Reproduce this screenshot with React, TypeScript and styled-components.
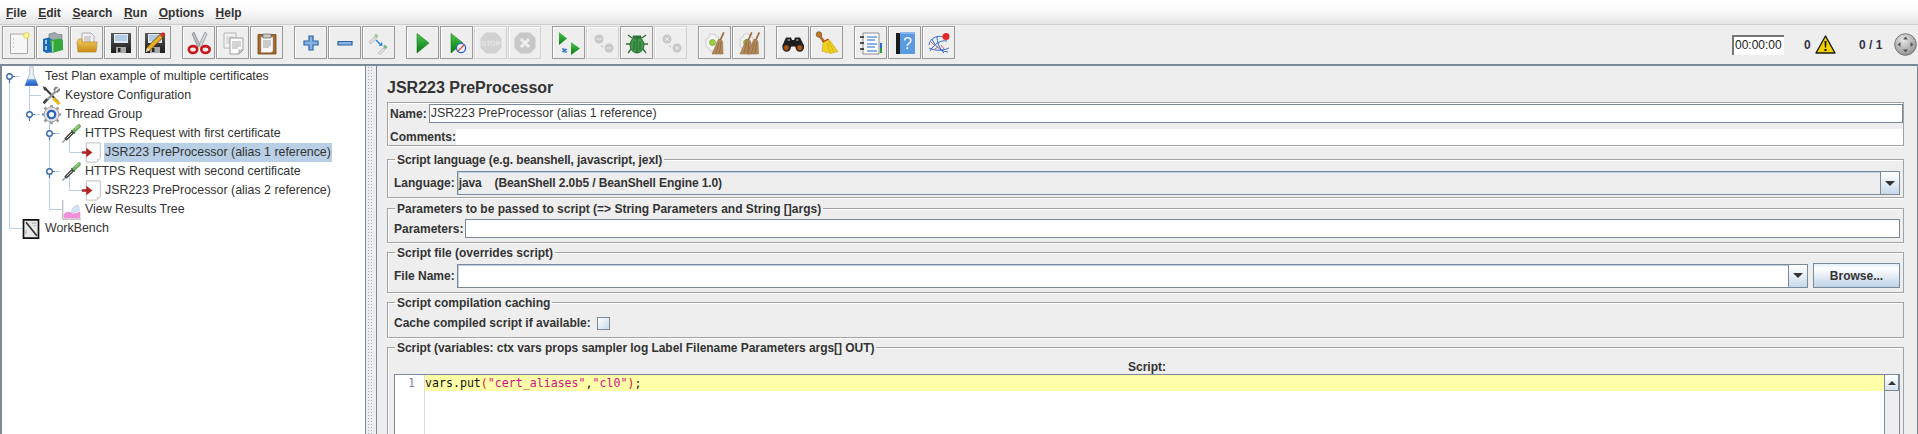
import styled, { createGlobalStyle } from "styled-components";
import type { ReactNode } from "react";

const Global = createGlobalStyle`
  html, body {
    margin: 0;
    padding: 0;
    overflow: hidden;
    background: #eeeeee;
  }
  * {
    box-sizing: border-box;
  }
`;

const Window = styled.div`
  width: 1918px;
  height: 434px;
  overflow: hidden;
  display: flex;
  flex-direction: column;
  font-family: "Liberation Sans", Arial, sans-serif;
  font-size: 12px;
  color: #333333;
  background: #eeeeee;
`;

const MenuBar = styled.div`
  height: 25px;
  flex: none;
  display: flex;
  align-items: center;
  gap: 11.5px;
  padding: 2px 0 0 6px;
  font-weight: bold;
  background: linear-gradient(#ffffff 0%, #fbfbfb 40%, #e4e4e4 100%);
  border-bottom: 1px solid #cfcfcf;
`;

const MenuItem = styled.span`
  display: inline-block;
  &::first-letter {
    text-decoration: underline;
  }
`;

const ToolBar = styled.div`
  height: 39px;
  flex: none;
  display: flex;
  align-items: flex-start;
  padding: 1px 1px 0 2px;
`;

const ToolGroup = styled.div`
  display: flex;
  gap: 1px;
  margin-right: 11px;
  &:last-of-type {
    margin-right: 0;
  }
`;

const ToolButton = styled.div<{ $off?: boolean }>`
  width: 33px;
  height: 33px;
  display: flex;
  align-items: center;
  justify-content: center;
  background: #eeeeee;
  border: 1px solid ${(p) => (p.$off ? "#d2d2d2" : "#9a9a9a")};
  box-shadow: inset 1px 1px 0 #ffffff;
`;

const Status = styled.div`
  margin-left: auto;
  display: flex;
  align-items: center;
  height: 37px;
  font-weight: bold;
  color: #33334a;
`;

const Timer = styled.div`
  width: 52px;
  height: 20px;
  background: #ffffff;
  border-top: 2px solid #777777;
  border-left: 2px solid #777777;
  font-weight: normal;
  color: #222222;
  line-height: 17px;
  padding-left: 1px;
  white-space: nowrap;
`;

const ErrorCount = styled.span`
  margin-left: 20px;
  width: 11px;
`;

const RunCount = styled.span`
  margin-left: 23px;
  width: 35px;
  white-space: pre;
`;

const Split = styled.div`
  flex: 1;
  min-height: 0;
  display: flex;
  border-top: 2px solid #7a8a99;
`;

const TreePane = styled.div`
  width: 366px;
  flex: none;
  position: relative;
  background: #ffffff;
  border-left: 2px solid #7a8a99;
  border-right: 1px solid #7a8a99;
  padding-top: 1px;
  font-size: 12.4px;
`;

const Lines = styled.svg`
  position: absolute;
  left: -2px;
  top: -66px;
  pointer-events: none;
`;

const TreeRow = styled.div<{ $level: number }>`
  position: relative;
  height: 19px;
  display: flex;
  align-items: center;
  padding-left: ${(p) => 19 + p.$level * 20}px;
  white-space: nowrap;
`;

const TreeIcon = styled.span`
  width: 24px;
  height: 19px;
  flex: none;
  display: flex;
  align-items: center;
`;

const TreeLabel = styled.span<{ $selected?: boolean }>`
  height: 19px;
  line-height: 19px;
  padding: 0 1px;
  margin-left: -1px;
  background: ${(p) => (p.$selected ? "#b8cfe5" : "transparent")};
`;

const Divider = styled.div`
  width: 10px;
  flex: none;
  background-color: #eeeeee;
  background-image: radial-gradient(#9fb0c0 0.7px, transparent 0.8px);
  background-size: 3px 3px;
  background-position: 2px 0;
  border-left: 2px solid #eeeeee;
  border-right: 2px solid #eeeeee;
`;

const FormPane = styled.div`
  flex: 1;
  min-width: 0;
  display: flex;
  flex-direction: column;
  border-left: 1px solid #7a8a99;
  border-right: 1px solid #7a8a99;
  padding: 0 13px 0 10px;
`;

const Title = styled.div`
  height: 36px;
  flex: none;
  padding-top: 13px;
  line-height: 18px;
  font-size: 16px;
  font-weight: bold;
`;

const NamePanel = styled.div`
  height: 44px;
  flex: none;
  display: flex;
  flex-direction: column;
  gap: 6px;
  border: 1px solid #a3a3a3;
  box-shadow: 0 1px 0 #ffffff, inset 1px 1px 0 #ffffff;
  font-weight: bold;
  padding: 1px 0 0 2px;
  margin-bottom: 5px;
`;

const Row = styled.div<{ $h?: number }>`
  display: flex;
  align-items: center;
  height: ${(p) => p.$h ?? 18}px;
  white-space: pre;
`;

const Group = styled.fieldset<{ $h: number; $top?: number; $gap?: number }>`
  height: ${(p) => p.$h}px;
  flex: none;
  margin: 0 0 ${(p) => p.$gap ?? 1}px;
  min-width: 0;
  padding: ${(p) => p.$top ?? 3}px 3px 0 6px;
  border: 1px solid #a3a3a3;
  box-shadow: 0 1px 0 #ffffff, inset 1px 1px 0 #ffffff;
  font-weight: bold;
  display: block;
`;

const Legend = styled.legend<{ $track?: number }>`
  margin-left: 1px;
  padding: 0 2px 0 2px;
  font-weight: bold;
  height: 16px;
  line-height: 18px;
  white-space: nowrap;
  letter-spacing: ${(p) => p.$track ?? 0}px;
`;

const TextField = styled.div<{ $h?: number }>`
  flex: 1;
  height: ${(p) => p.$h ?? 19}px;
  margin-left: 2px;
  background: #ffffff;
  border: 1px solid #7a8a99;
  font-weight: normal;
  font-size: 12.4px;
  line-height: 16px;
  padding-left: 1px;
`;

const BlankField = styled.div`
  flex: 1;
  height: 16px;
  background: #ffffff;
`;

const Combo = styled.div<{ $white?: boolean }>`
  flex: 1;
  height: 24px;
  margin-left: 2px;
  display: flex;
  border: 1px solid #7a8a99;
  box-shadow: inset 1px 1px 0 #b8cfe5;
  background: ${(p) => (p.$white ? "#ffffff" : "#eeeeee")};
  line-height: 22px;
  padding-left: 1px;
`;

const ComboText = styled.span`
  flex: 1;
  letter-spacing: -0.1px;
`;

const ComboArrow = styled.div`
  width: 19px;
  flex: none;
  display: flex;
  align-items: center;
  justify-content: center;
  border-left: 1px solid #7a8a99;
  background: linear-gradient(#ffffff 0%, #e6eef6 50%, #c6d8ea 100%);
  &::after {
    content: "";
    border-left: 5px solid transparent;
    border-right: 5px solid transparent;
    border-top: 5px solid #333333;
  }
`;

const BrowseButton = styled.div`
  width: 87px;
  height: 25px;
  margin-left: 5px;
  border: 1px solid #7a8a99;
  display: flex;
  align-items: center;
  justify-content: center;
  background: linear-gradient(#e4eef8 0%, #ffffff 20%, #dfe9f4 60%, #bdd2e6 100%);
`;

const CheckBox = styled.span`
  width: 13px;
  height: 13px;
  margin-left: 6px;
  border: 1px solid #7a8a99;
  background: linear-gradient(135deg, #ffffff 0%, #c8d9ea 100%);
`;

const ScriptHead = styled.div`
  text-align: center;
  height: 19px;
  padding-top: 6px;
  line-height: 12px;
`;

const Editor = styled.div`
  display: flex;
  height: 200px;
  border: 1px solid #7a8a99;
  background: #ffffff;
  font-weight: normal;
`;

const Gutter = styled.div`
  width: 30px;
  flex: none;
  border-right: 1px solid #dddddd;
  font-family: "DejaVu Sans Mono", monospace;
  font-size: 11.6px;
  line-height: 16px;
  color: #8c7fa6;
  padding-left: 13px;
`;

const Code = styled.div`
  flex: 1;
  min-width: 0;
`;

const CurrentLine = styled.div`
  height: 16px;
  background: #ffffaa;
  font-family: "DejaVu Sans Mono", monospace;
  font-size: 11.6px;
  line-height: 16px;
  color: #111111;
  white-space: pre;
`;

const Paren = styled.span`
  color: #e01030;
`;

const Str = styled.span`
  color: #d0108a;
`;

const ScrollBar = styled.div`
  width: 15px;
  flex: none;
  background: #eeeeee;
  border-left: 1px solid #7a8a99;
`;

const ScrollUp = styled.div`
  height: 16px;
  display: flex;
  align-items: center;
  justify-content: center;
  border: 1px solid #7a8a99;
  border-left: none;
  border-top: none;
  background: linear-gradient(#ffffff, #d5e2ef);
  &::after {
    content: "";
    border-left: 4px solid transparent;
    border-right: 4px solid transparent;
    border-bottom: 4px solid #333333;
  }
`;

const Svg = ({ children, size = 24 }: { children: ReactNode; size?: number }) => (
  <svg width={size} height={size} viewBox="0 0 24 24">
    {children}
  </svg>
);

const Grad = ({ id, a, b }: { id: string; a: string; b: string }) => (
  <defs>
    <linearGradient id={id} x1="0" y1="0" x2="0" y2="1">
      <stop offset="0" stopColor={a} />
      <stop offset="1" stopColor={b} />
    </linearGradient>
  </defs>
);

const NewIcon = () => (
  <Svg>
    <path d="M3.5 3h17v19.5h-17z" fill="#f6f6f6" stroke="#a8a8a8" />
    <circle cx="19.5" cy="4.5" r="2.8" fill="#fff6a0" stroke="#e6d040" />
    <path d="M6 8h1M6 12h1M6 16h1" stroke="#999" />
  </Svg>
);

const TemplatesIcon = () => (
  <Svg>
    <path d="M8 3l6-1.5 3 2 4 0v10l-13 0z" fill="#a0a8b0" stroke="#6a7480" strokeWidth=".6" />
    <path d="M2 8l6-1.5 3 2v13l-6 .5-3-2z" fill="#1d6ab8" />
    <path d="M4 9h2v4h-2zM4 15h2v4h-2z" fill="#9cc8ee" />
    <path d="M9 9l11-1.5 2 2v9.5l-11 3z" fill="#35a83c" />
    <path d="M11 10l1.5-.2v11l-1.5.4z" fill="#8fdc90" />
  </Svg>
);

const OpenIcon = () => (
  <Svg>
    <Grad id="fold" a="#f6cf60" b="#c98a16" />
    <path d="M7 2h9l3 3v8H7z" fill="#f4f4f4" stroke="#9a9a9a" strokeWidth=".8" />
    <path d="M9 6h7M9 8h7M9 10h7" stroke="#a0a0a0" strokeWidth=".8" />
    <path d="M2 11l2-3h3v3h15v1l-1 9H3z" fill="url(#fold)" stroke="#b07c18" strokeWidth=".6" />
  </Svg>
);

const Floppy = ({ id }: { id: string }) => (
  <>
    <Grad id={id} a="#5a5a5a" b="#1d1d1d" />
    <path d="M2 2h20v20H2z" fill={`url(#${id})`} />
    <path d="M5 3h14v9H5z" fill="#dfe9f4" />
    <path d="M6 5h12M6 7h12M6 9h12" stroke="#6ea0d0" strokeWidth=".8" />
    <path d="M7 16h10v6H7z" fill="#a8a8a8" />
    <path d="M9 17h2.5v4H9z" fill="#262626" />
  </>
);

const SaveIcon = () => (
  <Svg>
    <Floppy id="fl1" />
  </Svg>
);

const SaveAsIcon = () => (
  <Svg>
    <Floppy id="fl2" />
    <path d="M3 20l1.2-4L17 3.5l3 3L7.3 19z" fill="#e8b020" stroke="#3a2a10" strokeWidth=".7" />
    <path d="M17 3.5l3-2.5 2.5 2.5-2.5 3z" fill="#d03030" />
    <path d="M2.5 21.5l1.7-5 3.1 2.6z" fill="#f2dcb0" />
  </Svg>
);

const CutIcon = () => (
  <Svg>
    <path d="M7 1l6 13-2 2.5L5 3z" fill="#b8bcc0" stroke="#777" strokeWidth=".6" />
    <path d="M18 1l-6 13 2 2.5L20 3z" fill="#d4d8da" stroke="#777" strokeWidth=".6" />
    <ellipse cx="6" cy="18.5" rx="4.2" ry="3.4" fill="none" stroke="#c81818" strokeWidth="2.6" />
    <ellipse cx="18.5" cy="18.5" rx="4.2" ry="3.4" fill="none" stroke="#c81818" strokeWidth="2.6" />
  </Svg>
);

const CopyIcon = () => (
  <Svg>
    <path d="M3 2h12v15H3z" fill="#f2f2f2" stroke="#a8a8a8" strokeWidth=".8" />
    <path d="M5 6h8M5 8h8M5 10h8M5 12h8" stroke="#b8b8b8" strokeWidth=".7" />
    <path d="M9 7h13v12l-4 4H9z" fill="#fbfbfb" stroke="#8a8a8a" strokeWidth=".8" />
    <path d="M11 11h9M11 13h9M11 15h9M11 17h6" stroke="#8a8a8a" strokeWidth=".7" />
    <path d="M18 23v-4h4z" fill="#d0d0d0" stroke="#8a8a8a" strokeWidth=".6" />
  </Svg>
);

const PasteIcon = () => (
  <Svg>
    <path d="M3 3.5h18V23H3z" fill="#a86a2a" stroke="#6e4414" strokeWidth=".8" />
    <path d="M6 6h12v14l-2 1.5H6z" fill="#f8f8f8" stroke="#999" strokeWidth=".5" />
    <path d="M8 3h8v4H8z" fill="#c8c8c8" stroke="#666" strokeWidth=".7" />
    <path d="M8 10h8M8 12h8M8 14h8M8 16h6" stroke="#777" strokeWidth=".7" />
  </Svg>
);

const PlusIcon = () => (
  <Svg>
    <path d="M10 5h4v5h5v4h-5v5h-4v-5H5v-4h5z" fill="#8ab4e0" stroke="#2a62a8" strokeWidth="1.2" />
  </Svg>
);

const MinusIcon = () => (
  <Svg>
    <path d="M5 10.5h14v3.5H5z" fill="#8ab4e0" stroke="#2a62a8" strokeWidth="1.2" />
  </Svg>
);

const ToggleIcon = () => (
  <Svg>
    <path d="M2 11l5-5 2 2-5 5z" fill="#dcdcdc" stroke="#aaa" strokeWidth=".5" />
    <path d="M7 5l2-2.5 2.5 2.5-2 2.5z" fill="#9cc89a" />
    <path d="M9 9l4 4" stroke="#2a80e0" strokeWidth="1.4" />
    <path d="M15.5 15l-4-.5 3.5-3.5z" fill="#2a80e0" />
    <path d="M11 22l5-5 2 2-5 5z" fill="#dcdcdc" stroke="#aaa" strokeWidth=".5" />
    <path d="M16 16l2-2.5 2.5 2.5-2 2.5z" fill="#7ab878" />
  </Svg>
);

const PlayIcon = ({ id }: { id: string }) => (
  <>
    <Grad id={id} a="#4cc84c" b="#067a14" />
    <path d="M6 2.5l12 9.5L6 22z" fill={`url(#${id})`} stroke="#0a6a14" strokeWidth=".5" />
  </>
);

const StartIcon = () => (
  <Svg>
    <PlayIcon id="pl1" />
  </Svg>
);

const StartNoPauseIcon = () => (
  <Svg>
    <PlayIcon id="pl2" />
    <circle cx="16" cy="17" r="4.6" fill="#eef4fc" stroke="#2a62c8" strokeWidth="1.3" />
    <path d="M13 20l6-6" stroke="#e04040" strokeWidth="1.3" />
  </Svg>
);

const StopIcon = () => (
  <Svg>
    <path d="M7 1.5h10L22.5 7v10L17 22.5H7L1.5 17V7z" fill="#d2d2d2" />
    <text x="12" y="15" textAnchor="middle" fontSize="7" fontWeight="bold" fill="#e6e6e6">
      STOP
    </text>
  </Svg>
);

const ShutdownIcon = () => (
  <Svg>
    <path d="M7 1.5h10L22.5 7v10L17 22.5H7L1.5 17V7z" fill="#c8c8c8" />
    <path d="M8 8l8 8M16 8l-8 8" stroke="#eeeeee" strokeWidth="3" />
  </Svg>
);

const RemoteStartIcon = () => (
  <Svg>
    <Grad id="rs" a="#4cc84c" b="#067a14" />
    <path d="M2 1l8 6.5-8 6.5z" fill="url(#rs)" />
    <path d="M14 11l9 6.5-9 6.5z" fill="url(#rs)" />
    <path d="M5 18l4 .5-1.5 1.5M10 21l-4-.5 1.5-1.5" stroke="#3a78c8" strokeWidth="1.3" fill="none" />
  </Svg>
);

const RemoteDimIcon = ({ x }: { x?: boolean }) => (
  <Svg>
    <circle cx="8" cy="8" r="4.5" fill="#c8c8c8" />
    <circle cx="18" cy="17" r="4.5" fill="#c8c8c8" />
    <path d="M10 14.5l2 1.5" stroke="#c8c8c8" strokeWidth="1.5" />
    {x ? (
      <path d="M6 6l4 4M10 6l-4 4M16 15l4 4M20 15l-4 4" stroke="#eee" strokeWidth="1" />
    ) : (
      <path d="M5.5 8h5M15.5 17h5" stroke="#eee" strokeWidth="1.2" />
    )}
  </Svg>
);

const BugIcon = () => (
  <Svg>
    <path d="M7 7L3 4M17 7l4-3M5 13H1M19 13h4M6 18l-3 4M18 18l3 4" stroke="#3a6a3a" strokeWidth="1.3" fill="none" />
    <ellipse cx="12" cy="14" rx="7" ry="8" fill="#3f9a4a" stroke="#1d5a28" strokeWidth=".8" />
    <path d="M8 4.5h8l1 3H7z" fill="#2a7238" />
    <path d="M12 7v15M9 10v9M15 10v9" stroke="#1d5a28" strokeWidth=".8" />
  </Svg>
);

const Broom = ({ dx = 0 }: { dx?: number }) => (
  <g transform={`translate(${dx} 0)`}>
    <path d="M20 1l1.5.7-3.5 8-1.5-.7z" fill="#9a6a3a" />
    <path d="M15.5 8l4 2 .5 13H9z" fill="#b48a5a" stroke="#8a6234" strokeWidth=".5" />
    <path d="M16 11l-3 11M18 11l-1.5 11" stroke="#7a5a30" strokeWidth=".6" />
  </g>
);

const GearBack = () => (
  <>
    <path
      d="M7 3h5l1 2.5 3 1v4l-1.5 1.5 1 4-3 1.5-1 2.5H7l-1-2.5-3-1.5v-8l3-1.5z"
      fill="#f4f4f4"
      stroke="#c4c4c4"
      strokeWidth=".8"
    />
    <circle cx="9.5" cy="11.5" r="3" fill="#9ad040" stroke="#6a9a20" strokeWidth=".6" />
  </>
);

const ClearIcon = () => (
  <Svg>
    <GearBack />
    <Broom />
  </Svg>
);

const ClearAllIcon = () => (
  <Svg>
    <GearBack />
    <Broom dx={-6} />
    <Broom dx={1.5} />
  </Svg>
);

const BinocularsIcon = () => (
  <Svg>
    <path d="M5 6.5h5l1 2.5h2l1-2.5h5l4 8v2a4.2 4.2 0 0 1-8.4 0l-.6-1h-3.6l-.6 1a4.2 4.2 0 0 1-8.4 0v-2z" fill="#1e1e1e" />
    <circle cx="5.3" cy="16.7" r="2.8" fill="#a85a1a" stroke="#5a3010" />
    <circle cx="18.7" cy="16.7" r="2.8" fill="#a85a1a" stroke="#5a3010" />
    <path d="M6.5 8H9v2H6.5zM15 8h2.500v2H15z" fill="#777" />
  </Svg>
);

const ResetBroomIcon = () => (
  <Svg>
    <circle cx="4" cy="3.5" r="2.8" fill="#b87a30" stroke="#7a4a10" strokeWidth=".6" />
    <path d="M5 5l4 6" stroke="#a86a20" strokeWidth="2.6" />
    <path d="M7 11l6-3.5 2 3z" fill="#d02020" />
    <path d="M8 11.5l6-3 9 12-8 2-2-1.5-2 1-2-2-2 .5z" fill="#f0d020" stroke="#b09010" strokeWidth=".5" />
    <path d="M12 12l3 9M14 11l5 10" stroke="#c8a810" strokeWidth=".7" />
  </Svg>
);

const ListIcon = () => (
  <Svg>
    <path d="M4 2h16v21H4z" fill="#fafafa" stroke="#777" strokeWidth=".8" />
    <path d="M8 6h10M8 9h8M8 13h10M8 16h8M8 20h10" stroke="#1a6ad0" strokeWidth="1.1" />
    <path d="M1 6h4M1 12h4M1 18h4" stroke="#222" strokeWidth="1.5" />
    <path d="M21 12h2v5h-2z" fill="#2a6ad0" />
    <path d="M21 17h2v5h-2z" fill="#2a9a3a" />
  </Svg>
);

const HelpIcon = () => (
  <Svg>
    <path d="M3 2h4v21H3z" fill="#1a1a1a" />
    <path d="M7 1h15v22H7z" fill="#5a9ae0" />
    <path d="M7 1h15v2H7z" fill="#8ab8ee" />
    <text x="14.5" y="18" textAnchor="middle" fontSize="16" fill="#f4f8ff" fontFamily="Liberation Sans">
      ?
    </text>
  </Svg>
);

const WhatIcon = () => (
  <Svg>
    <path
      d="M2 14C3 7 10 4 16 6M3 20C8 12 14 9 20 10M5 8c2 5 7 12 16 13M10 5c0 6 2 12 7 17M2 17c6 3 14 3 20 0"
      fill="none"
      stroke="#3a6ad0"
      strokeWidth="1"
    />
    <path d="M4 11l3 3M8 18l3-2M14 14l3 4" stroke="#d06060" strokeWidth="1" />
    <circle cx="19" cy="5.5" r="3.5" fill="#e02828" />
  </Svg>
);

const WarningIcon = () => (
  <svg width="21" height="19" viewBox="0 0 21 19">
    <path d="M10.5 1L20 18H1z" fill="#f4d000" stroke="#1a1a1a" strokeWidth="1.4" strokeLinejoin="round" />
    <path d="M9.5 6h2l-.4 6.5H9.900zM9.500 14h2v2h-2z" fill="#111" />
  </svg>
);

const LogIcon = () => (
  <svg width="23" height="23" viewBox="0 0 23 23">
    <defs>
      <radialGradient id="lg" cx=".4" cy=".3" r=".8">
        <stop offset="0" stopColor="#e8e8e8" />
        <stop offset="1" stopColor="#8a8a8a" />
      </radialGradient>
    </defs>
    <circle cx="11.5" cy="11.5" r="10.8" fill="url(#lg)" stroke="#777" />
    <path d="M11.5 3.5l2.5 3h-5zM11.5 19.5l2.5-3h-5zM3.5 11.5l3-2.5v5zM19.5 11.5l-3-2.5v5z" fill="#555" />
  </svg>
);

const FlaskIcon = () => (
  <Svg size={21}>
    <Grad id="liq" a="#5a9ae8" b="#1a56c0" />
    <path d="M10 1h4v8l5.5 13h-15L10 9z" fill="#eaf1f8" stroke="#a8b8c8" />
    <path d="M7.5 15h9l3 7.5h-15z" fill="url(#liq)" />
  </Svg>
);

const ToolsIcon = () => (
  <Svg size={21}>
    <path d="M4 3l16 17" stroke="#333" strokeWidth="2.4" />
    <path d="M2 1l4 2 .5 3.5L3.5 6z" fill="#444" />
    <path d="M20 2l-5 5-1-2 2-3zM21 3l-4.500 5 2 1 3.500-3z" fill="#888" />
    <path d="M17 7L5 19" stroke="#999" strokeWidth="2.6" />
    <path d="M14 15l7 7" stroke="#e8b818" strokeWidth="3.6" />
    <path d="M7 16l-4 5" stroke="#444" strokeWidth="3" />
  </Svg>
);

const GearIcon = () => (
  <Svg size={21}>
    <g stroke="#9a9a9a" strokeWidth="3">
      <path d="M12 1v22M1 12h22M4 4l16 16M20 4L4 20" />
    </g>
    <circle cx="12" cy="12" r="8.5" fill="#e2e2e2" stroke="#999" />
    <circle cx="12" cy="12" r="5.5" fill="#2a62b8" />
    <circle cx="12" cy="12" r="3" fill="#f2f6fb" />
  </Svg>
);

const PipetteIcon = () => (
  <Svg size={21}>
    <path d="M1.5 22.5L6 18" stroke="#8a8a8a" strokeWidth="1.4" />
    <path d="M5 19l9-9" stroke="#4a4a4a" strokeWidth="3.8" />
    <path d="M6.5 17.5L12.500 11.500" stroke="#e0e0e0" strokeWidth="1" />
    <path d="M12 8l4 4" stroke="#3a5a3a" strokeWidth="1.6" />
    <path d="M15.500 8.500L20.500 3.500" stroke="#6cae5c" strokeWidth="4.600" strokeLinecap="round" />
    <path d="M16.500 6.500L20 3" stroke="#a8d898" strokeWidth="1.200" strokeLinecap="round" />
  </Svg>
);

const PreIcon = () => (
  <Svg size={21}>
    <path d="M6 1h16v18l-4 4H6z" fill="#fdfdfd" stroke="#b8b8b8" />
    <path d="M18 23v-4h4z" fill="#d8d8d8" />
    <path d="M1 10.5h5v-4l7 5.500-7 5.500v-4H1z" fill="#b02424" />
  </Svg>
);

const ResultsIcon = () => (
  <Svg size={21}>
    <path d="M2 1v22h21" fill="none" stroke="#999" />
    <path d="M3 22v-4c3-4 6-4 9-2s7-1 10-2v8z" fill="#f090d8" />
    <path d="M12 16c0-5 3-9 8-9l1 6c-3 1-7 3-9 3z" fill="#d0e4f8" stroke="#a0b8d8" strokeWidth=".5" />
  </Svg>
);

const WorkbenchIcon = () => (
  <Svg size={20}>
    <path d="M3 1h18v22H3z" fill="#e8e8e8" stroke="#111" strokeWidth="2" />
    <path d="M6 4l13 16" stroke="#333" strokeWidth="2" />
    <path d="M13 5h5M15 8h3M6 13v5" stroke="#999" strokeWidth="1" />
  </Svg>
);

// connectors of the test plan tree, in page coordinates
const TreeLines = () => (
  <Lines width="366" height="368" viewBox="0 0 366 368">
    <g stroke="#b8cfe5" fill="none">
      <path d="M9.5 76v152.5H24" />
      <path d="M29.5 76v38.5M29.5 95.5H41M9.5 76.5H20M29.5 114.5H40" />
      <path d="M49.5 114v95.5H62M49.5 133.5H60M49.5 171.5H60" />
      <path d="M69.5 133v19.5H82M69.5 171v19.5H82" />
    </g>
    <g stroke="#4a72b0" strokeWidth="1.2" fill="none">
      <path d="M9.5 79v4M29.5 117v4M49.5 136v4M49.5 174v4M12 76.5h3M32 114.5h3M52 133.5h3M52 171.5h3" />
    </g>
    <g fill="#ffffff" stroke="#3a68a8" strokeWidth="1.4">
      <circle cx="9.5" cy="76.5" r="2.8" />
      <circle cx="29.5" cy="114.5" r="2.8" />
      <circle cx="49.5" cy="133.5" r="2.8" />
      <circle cx="49.5" cy="171.5" r="2.8" />
    </g>
  </Lines>
);

const menus = ["File", "Edit", "Search", "Run", "Options", "Help"];

const toolGroups: { icon: ReactNode; off?: boolean }[][] = [
  [
    { icon: <NewIcon /> },
    { icon: <TemplatesIcon /> },
    { icon: <OpenIcon /> },
    { icon: <SaveIcon /> },
    { icon: <SaveAsIcon /> },
  ],
  [{ icon: <CutIcon /> }, { icon: <CopyIcon /> }, { icon: <PasteIcon /> }],
  [{ icon: <PlusIcon /> }, { icon: <MinusIcon /> }, { icon: <ToggleIcon /> }],
  [
    { icon: <StartIcon /> },
    { icon: <StartNoPauseIcon /> },
    { icon: <StopIcon />, off: true },
    { icon: <ShutdownIcon />, off: true },
  ],
  [
    { icon: <RemoteStartIcon /> },
    { icon: <RemoteDimIcon />, off: true },
    { icon: <BugIcon /> },
    { icon: <RemoteDimIcon x />, off: true },
  ],
  [{ icon: <ClearIcon /> }, { icon: <ClearAllIcon /> }],
  [{ icon: <BinocularsIcon /> }, { icon: <ResetBroomIcon /> }],
  [{ icon: <ListIcon /> }, { icon: <HelpIcon /> }, { icon: <WhatIcon /> }],
];

const treeItems: { level: number; icon: ReactNode; label: string; selected?: boolean }[] = [
  { level: 0, icon: <FlaskIcon />, label: "Test Plan example of multiple certificates" },
  { level: 1, icon: <ToolsIcon />, label: "Keystore Configuration" },
  { level: 1, icon: <GearIcon />, label: "Thread Group" },
  { level: 2, icon: <PipetteIcon />, label: "HTTPS Request with first certificate" },
  { level: 3, icon: <PreIcon />, label: "JSR223 PreProcessor (alias 1 reference)", selected: true },
  { level: 2, icon: <PipetteIcon />, label: "HTTPS Request with second certificate" },
  { level: 3, icon: <PreIcon />, label: "JSR223 PreProcessor (alias 2 reference)" },
  { level: 2, icon: <ResultsIcon />, label: "View Results Tree" },
  { level: 0, icon: <WorkbenchIcon />, label: "WorkBench" },
];

export default function App() {
  return (
    <Window>
      <Global />
      <MenuBar>
        {menus.map((m) => (
          <MenuItem key={m}>{m}</MenuItem>
        ))}
      </MenuBar>
      <ToolBar>
        {toolGroups.map((group, i) => (
          <ToolGroup key={i}>
            {group.map((b, j) => (
              <ToolButton key={j} $off={b.off}>
                {b.icon}
              </ToolButton>
            ))}
          </ToolGroup>
        ))}
        <Status>
          <Timer>00:00:00</Timer>
          <ErrorCount>0</ErrorCount>
          <WarningIcon />
          <RunCount>0 / 1</RunCount>
          <LogIcon />
        </Status>
      </ToolBar>
      <Split>
        <TreePane>
          <TreeLines />
          {treeItems.map((item) => (
            <TreeRow key={item.label} $level={item.level}>
              <TreeIcon>{item.icon}</TreeIcon>
              <TreeLabel $selected={item.selected}>{item.label}</TreeLabel>
            </TreeRow>
          ))}
        </TreePane>
        <Divider />
        <FormPane>
          <Title>JSR223 PreProcessor</Title>
          <NamePanel>
            <Row $h={19}>
              Name:
              <TextField>JSR223 PreProcessor (alias 1 reference)</TextField>
            </Row>
            <Row $h={16}>
              Comments:
              <BlankField />
            </Row>
          </NamePanel>
          <Group $h={47} $top={4} $gap={2}>
            <Legend $track={-0.1}>Script language (e.g. beanshell, javascript, jexl)</Legend>
            <Row $h={24}>
              Language:
              <Combo>
                <ComboText>{"java    (BeanShell 2.0b5 / BeanShell Engine 1.0)"}</ComboText>
                <ComboArrow />
              </Combo>
            </Row>
          </Group>
          <Group $h={43}>
            <Legend>{"Parameters to be passed to script (=> String Parameters and String []args)"}</Legend>
            <Row $h={19}>
              Parameters:
              <TextField />
            </Row>
          </Group>
          <Group $h={49}>
            <Legend>Script file (overrides script)</Legend>
            <Row $h={25}>
              File Name:
              <Combo $white>
                <ComboText />
                <ComboArrow />
              </Combo>
              <BrowseButton>Browse...</BrowseButton>
            </Row>
          </Group>
          <Group $h={44} $top={1}>
            <Legend>Script compilation caching</Legend>
            <Row $h={24}>
              Cache compiled script if available:
              <CheckBox />
            </Row>
          </Group>
          <Group $h={260} $top={0}>
            <Legend $track={-0.05}>{"Script (variables: ctx vars props sampler log Label Filename Parameters args[] OUT)"}</Legend>
            <ScriptHead>Script:</ScriptHead>
            <Editor>
              <Gutter>1</Gutter>
              <Code>
                <CurrentLine>
                  vars.put<Paren>(</Paren>
                  <Str>"cert_aliases"</Str>,<Str>"cl0"</Str>
                  <Paren>)</Paren>;
                </CurrentLine>
              </Code>
              <ScrollBar>
                <ScrollUp />
              </ScrollBar>
            </Editor>
          </Group>
        </FormPane>
      </Split>
    </Window>
  );
}
